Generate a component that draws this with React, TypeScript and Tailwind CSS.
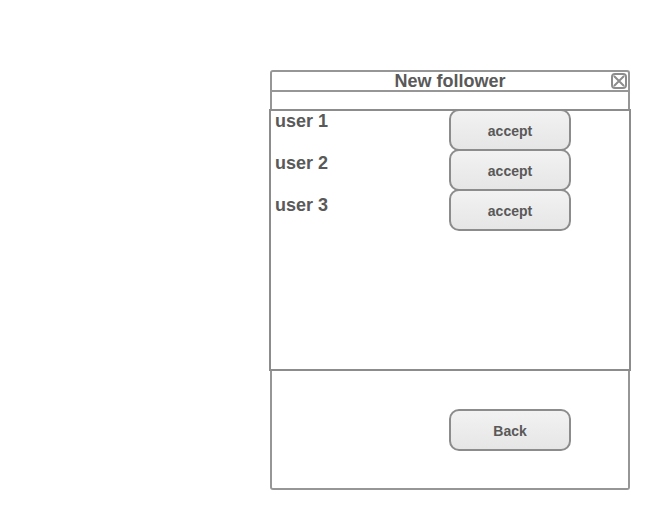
const users = ["user 1", "user 2", "user 3"];

const buttonStyle =
  "h-[42px] w-[122px] shrink-0 rounded-[10px] border-2 border-[#8c8c8c] bg-linear-to-b from-[#f2f2f2] to-[#e6e6e6] pt-0.5 text-sm font-bold";

function CloseIcon() {
  return (
    <svg viewBox="0 0 16 16" className="size-4" fill="none" stroke="#8c8c8c" strokeWidth="2" aria-hidden="true">
      <rect x="1" y="1" width="14" height="14" rx="3" />
      <path d="M3 3L13 13M13 3L3 13" />
    </svg>
  );
}

export default function App() {
  return (
    <main
      className="flex min-h-screen justify-end bg-white pt-[70px] pr-[19px] pb-5 text-[#595959]"
      style={{ fontFamily: '"Liberation Sans", Arial, sans-serif' }}
    >
      <section aria-labelledby="dialog-title" className="w-full max-w-[362px]">
        <header className="mx-px rounded-t-[3px] border-2 border-b-0 border-[#969696]">
          <div className="grid h-5 grid-cols-[18px_1fr_18px] items-center border-b-2 border-[#969696]">
            <h1 id="dialog-title" className="col-start-2 text-center text-lg leading-[18px] font-bold">
              New follower
            </h1>
            <button type="button" aria-label="Close" className="flex justify-center">
              <CloseIcon />
            </button>
          </div>
          <div className="h-[17px]" />
        </header>

        <div className="flex h-[262px] justify-between border-2 border-[#8c8c8c] pr-[58px] pl-1">
          <ul className="flex flex-col gap-[21px] text-lg leading-[21px] font-bold">
            {users.map((user) => (
              <li key={user}>{user}</li>
            ))}
          </ul>
          <div className="flex flex-col">
            {users.map((user) => (
              <button key={user} type="button" aria-label={`accept ${user}`} className={`-mt-0.5 ${buttonStyle}`}>
                accept
              </button>
            ))}
          </div>
        </div>

        <footer className="mx-px flex justify-end rounded-b-[3px] border-2 border-t-0 border-[#969696] pt-[38px] pr-[57px] pb-[37px]">
          <button type="button" className={buttonStyle}>
            Back
          </button>
        </footer>
      </section>
    </main>
  );
}
